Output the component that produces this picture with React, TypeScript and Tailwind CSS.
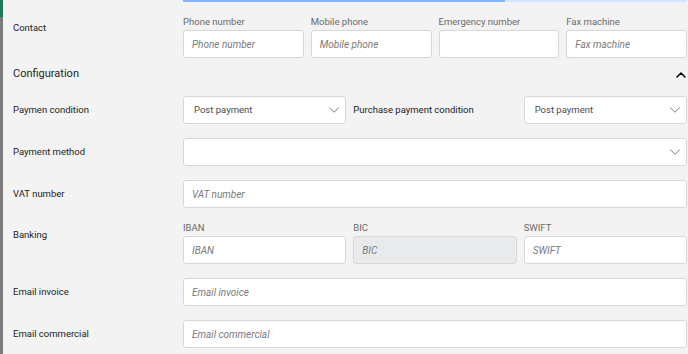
import { ChevronDown, ChevronUp } from 'lucide-react';

const font = { fontFamily: 'Roboto, "Noto Sans", sans-serif' };

function Field({ placeholder, disabled }: { placeholder?: string; disabled?: boolean }) {
  return (
    <div
      className={`h-[28px] rounded-[3px] border border-[#d7d7d7] px-[8px] flex items-center text-[10px] italic text-[#7a7a7a] ${
        disabled ? 'bg-[#e9eaec]' : 'bg-white'
      }`}
    >
      {placeholder}
    </div>
  );
}

function Select({ value }: { value?: string }) {
  return (
    <div className="h-[28px] rounded-[3px] border border-[#d7d7d7] bg-white pl-[10px] pr-[2px] flex items-center justify-between text-[9.5px] text-[#4a4a4a]">
      <span>{value}</span>
      <ChevronDown className="w-[18px] h-[18px] text-[#6b6b6b]" strokeWidth={1.2} />
    </div>
  );
}

function Sub({ children }: { children: string }) {
  return <div className="h-[12px] leading-[12px] text-[9.5px] text-[#6a6a6a] mb-[2px]">{children}</div>;
}

export default function App() {
  return (
    <div className="w-[688px] h-[354px] bg-[#f3f3f3] flex overflow-hidden text-[#222]" style={font}>
      {/* left rail */}
      <div className="w-[3px] flex flex-col flex-shrink-0">
        <div className="h-[17px] bg-[#1f7a5c]" />
        <div className="flex-1 bg-[#7b7b7b]" />
      </div>

      <div className="flex-1 pl-[10px] pr-[1px]">
        {/* top progress strip */}
        <div className="flex ml-[170px] h-[2px]">
          <div className="w-[322px] bg-[#8ab4f8]" />
          <div className="flex-1 bg-[#d6e4fb]" />
        </div>

        {/* Contact */}
        <div className="flex mt-[14px]">
          <div className="w-[170px] text-[9.5px] pt-[5px]">Contact</div>
          <div className="flex-1 grid grid-cols-4 gap-[7px]">
            <div>
              <Sub>Phone number</Sub>
              <Field placeholder="Phone number" />
            </div>
            <div>
              <Sub>Mobile phone</Sub>
              <Field placeholder="Mobile phone" />
            </div>
            <div>
              <Sub>Emergency number</Sub>
              <Field />
            </div>
            <div>
              <Sub>Fax machine</Sub>
              <Field placeholder="Fax machine" />
            </div>
          </div>
        </div>

        {/* Configuration header */}
        <div className="flex items-center justify-between h-[24px] mt-[4px]">
          <span className="text-[11px] text-[#1f1f1f]">Configuration</span>
          <ChevronUp className="w-[16px] h-[16px] text-black mr-[-2px] mt-[2px]" strokeWidth={2.2} />
        </div>

        <div className="flex flex-col gap-[14px] mt-[10px]">
          <div className="flex items-center">
            <div className="w-[170px] text-[9.5px]">Paymen condition</div>
            <div className="flex-1 grid grid-cols-3 gap-[7px] items-center">
              <Select value="Post payment" />
              <div className="text-[9.5px]">Purchase payment condition</div>
              <Select value="Post payment" />
            </div>
          </div>

          <div className="flex items-center">
            <div className="w-[170px] text-[9.5px]">Payment method</div>
            <div className="flex-1">
              <Select />
            </div>
          </div>

          <div className="flex items-center">
            <div className="w-[170px] text-[9.5px]">VAT number</div>
            <div className="flex-1">
              <Field placeholder="VAT number" />
            </div>
          </div>

          <div className="flex">
            <div className="w-[170px] text-[9.5px] pt-[6px]">Banking</div>
            <div className="flex-1 grid grid-cols-3 gap-[7px]">
              <div>
                <Sub>IBAN</Sub>
                <Field placeholder="IBAN" />
              </div>
              <div>
                <Sub>BIC</Sub>
                <Field placeholder="BIC" disabled />
              </div>
              <div>
                <Sub>SWIFT</Sub>
                <Field placeholder="SWIFT" />
              </div>
            </div>
          </div>

          <div className="flex items-center">
            <div className="w-[170px] text-[9.5px]">Email invoice</div>
            <div className="flex-1">
              <Field placeholder="Email invoice" />
            </div>
          </div>

          <div className="flex items-center">
            <div className="w-[170px] text-[9.5px]">Email commercial</div>
            <div className="flex-1">
              <Field placeholder="Email commercial" />
            </div>
          </div>
        </div>
      </div>
    </div>
  );
}
